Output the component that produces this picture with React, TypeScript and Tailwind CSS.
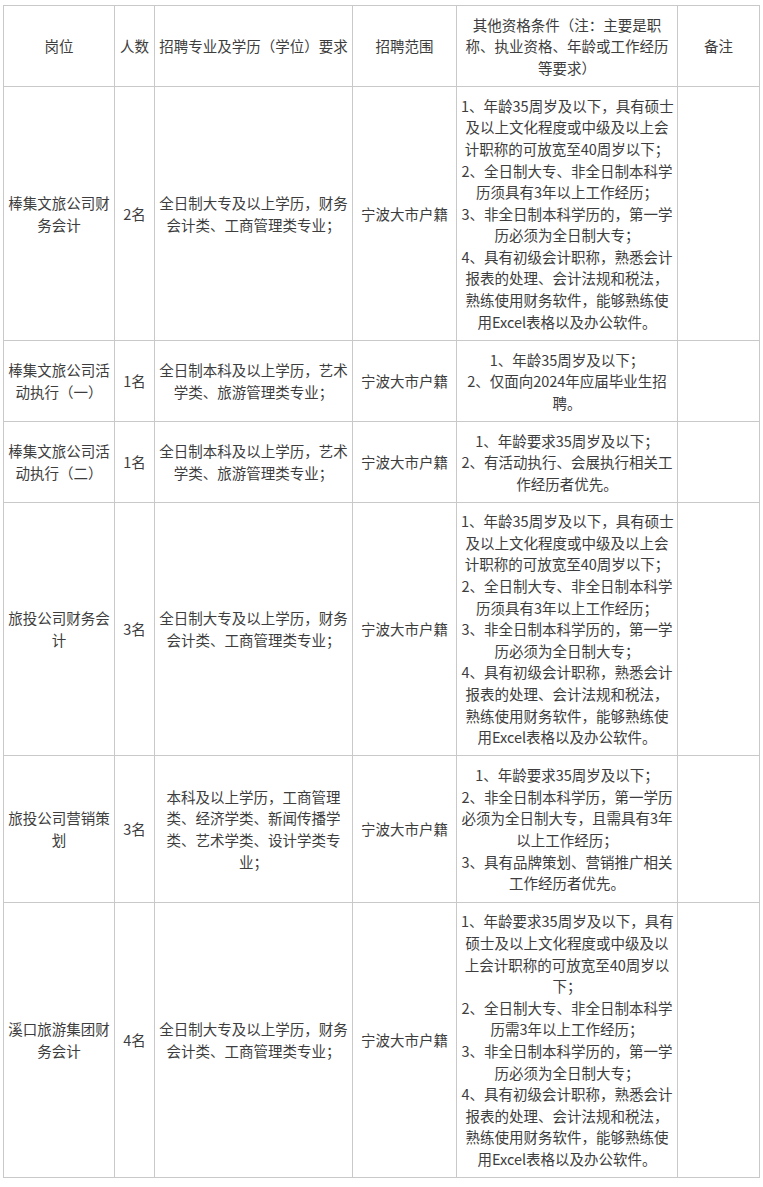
import React from "react";

type Row = {
  h: string;
  pos: string[];
  num: string[];
  major: string[];
  scope: string[];
  other: string[];
  note: string[];
};

const rows: Row[] = [
  {
    h: "h-[254px]",
    pos: ["棒集文旅公司财", "务会计"],
    num: ["2名"],
    major: ["全日制大专及以上学历，财务", "会计类、工商管理类专业；"],
    scope: ["宁波大市户籍"],
    other: [
      "1、年龄35周岁及以下，具有硕士",
      "及以上文化程度或中级及以上会",
      "计职称的可放宽至40周岁以下；",
      "2、全日制大专、非全日制本科学",
      "历须具有3年以上工作经历；",
      "3、非全日制本科学历的，第一学",
      "历必须为全日制大专；",
      "4、具有初级会计职称，熟悉会计",
      "报表的处理、会计法规和税法，",
      "熟练使用财务软件，能够熟练使",
      "用Excel表格以及办公软件。",
    ],
    note: [],
  },
  {
    h: "h-[81px]",
    pos: ["棒集文旅公司活", "动执行（一）"],
    num: ["1名"],
    major: ["全日制本科及以上学历，艺术", "学类、旅游管理类专业；"],
    scope: ["宁波大市户籍"],
    other: ["1、年龄35周岁及以下；", "2、仅面向2024年应届毕业生招", "聘。"],
    note: [],
  },
  {
    h: "h-[81px]",
    pos: ["棒集文旅公司活", "动执行（二）"],
    num: ["1名"],
    major: ["全日制本科及以上学历，艺术", "学类、旅游管理类专业；"],
    scope: ["宁波大市户籍"],
    other: ["1、年龄要求35周岁及以下；", "2、有活动执行、会展执行相关工", "作经历者优先。"],
    note: [],
  },
  {
    h: "h-[253px]",
    pos: ["旅投公司财务会", "计"],
    num: ["3名"],
    major: ["全日制大专及以上学历，财务", "会计类、工商管理类专业；"],
    scope: ["宁波大市户籍"],
    other: [
      "1、年龄35周岁及以下，具有硕士",
      "及以上文化程度或中级及以上会",
      "计职称的可放宽至40周岁以下；",
      "2、全日制大专、非全日制本科学",
      "历须具有3年以上工作经历；",
      "3、非全日制本科学历的，第一学",
      "历必须为全日制大专；",
      "4、具有初级会计职称，熟悉会计",
      "报表的处理、会计法规和税法，",
      "熟练使用财务软件，能够熟练使",
      "用Excel表格以及办公软件。",
    ],
    note: [],
  },
  {
    h: "h-[147px]",
    pos: ["旅投公司营销策", "划"],
    num: ["3名"],
    major: ["本科及以上学历，工商管理", "类、经济学类、新闻传播学", "类、艺术学类、设计学类专", "业；"],
    scope: ["宁波大市户籍"],
    other: [
      "1、年龄要求35周岁及以下；",
      "2、非全日制本科学历，第一学历",
      "必须为全日制大专，且需具有3年",
      "以上工作经历；",
      "3、具有品牌策划、营销推广相关",
      "工作经历者优先。",
    ],
    note: [],
  },
  {
    h: "h-[275px]",
    pos: ["溪口旅游集团财", "务会计"],
    num: ["4名"],
    major: ["全日制大专及以上学历，财务", "会计类、工商管理类专业；"],
    scope: ["宁波大市户籍"],
    other: [
      "1、年龄要求35周岁及以下，具有",
      "硕士及以上文化程度或中级及以",
      "上会计职称的可放宽至40周岁以",
      "下；",
      "2、全日制大专、非全日制本科学",
      "历需3年以上工作经历；",
      "3、非全日制本科学历的，第一学",
      "历必须为全日制大专；",
      "4、具有初级会计职称，熟悉会计",
      "报表的处理、会计法规和税法，",
      "熟练使用财务软件，能够熟练使",
      "用Excel表格以及办公软件。",
    ],
    note: [],
  },
];

function Lines({ lines }: { lines: string[] }) {
  return (
    <>
      {lines.map((l, i) => (
        <div key={i} className="whitespace-nowrap">
          {l}
        </div>
      ))}
    </>
  );
}

const td = "border border-[#c9c9c9] px-1 py-0 text-center align-middle";

export default function App() {
  return (
    <div
      className="w-[763px] h-[1187px] bg-white pl-[3px] pt-[5px] text-[#3d3d3d] text-[14.5px] leading-[21.6px]"
      style={{ fontFamily: '"Noto Sans CJK SC", "Noto Sans", sans-serif' }}
    >
      <table className="table-fixed border-collapse w-[756px]">
        <colgroup>
          <col className="w-[111px]" />
          <col className="w-[40px]" />
          <col className="w-[198px]" />
          <col className="w-[104px]" />
          <col className="w-[221px]" />
          <col className="w-[82px]" />
        </colgroup>
        <thead>
          <tr className="h-[81px]">
            <th className={td + " font-normal"}>岗位</th>
            <th className={td + " font-normal"}>人数</th>
            <th className={td + " font-normal"}>
              <Lines lines={["招聘专业及学历（学位）要求"]} />
            </th>
            <th className={td + " font-normal"}>招聘范围</th>
            <th className={td + " font-normal"}>
              <Lines lines={["其他资格条件（注：主要是职", "称、执业资格、年龄或工作经历", "等要求）"]} />
            </th>
            <th className={td + " font-normal"}>备注</th>
          </tr>
        </thead>
        <tbody>
          {rows.map((r, i) => (
            <tr key={i} className={r.h}>
              <td className={td}>
                <Lines lines={r.pos} />
              </td>
              <td className={td}>
                <Lines lines={r.num} />
              </td>
              <td className={td}>
                <Lines lines={r.major} />
              </td>
              <td className={td}>
                <Lines lines={r.scope} />
              </td>
              <td className={td}>
                <Lines lines={r.other} />
              </td>
              <td className={td}>
                <Lines lines={r.note} />
              </td>
            </tr>
          ))}
        </tbody>
      </table>
    </div>
  );
}
